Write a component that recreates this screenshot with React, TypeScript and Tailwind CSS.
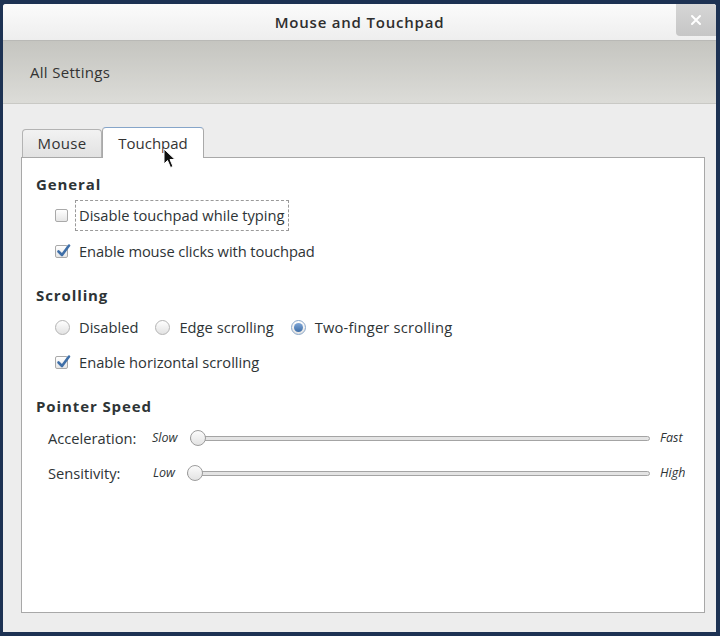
import React from "react";

const font = { fontFamily: '"Open Sans", "DejaVu Sans", sans-serif' };

function Checkbox({ checked }: { checked?: boolean }) {
  return (
    <span className="relative inline-block w-[13px] h-[13px] shrink-0 rounded-[2px] border border-[#a9a9a9] bg-gradient-to-b from-[#ffffff] to-[#e6e6e6]">
      {checked && (
        <svg className="absolute left-[0px] top-[-3px]" width="15" height="15" viewBox="0 0 15 15">
          <path d="M2.5 8.5 L6 12 L13 2.5" fill="none" stroke="#3f6fa8" strokeWidth="2.6" strokeLinecap="round" strokeLinejoin="round" />
        </svg>
      )}
    </span>
  );
}

function Radio({ checked }: { checked?: boolean }) {
  return (
    <span
      className={
        "relative inline-flex items-center justify-center w-[15px] h-[15px] shrink-0 rounded-full border bg-gradient-to-b from-[#ffffff] to-[#e2e2e2] " +
        (checked ? "border-[#8aa7c9]" : "border-[#b4b4b4]")
      }
    >
      {checked && <span className="w-[9px] h-[9px] rounded-full bg-gradient-to-b from-[#7fa6d6] to-[#3d6ea8]" />}
    </span>
  );
}

function Slider() {
  return (
    <div className="relative flex-1 h-[18px] flex items-center">
      <div className="w-full h-[5px] rounded-full border border-[#a4a4a4] bg-[#e4e4e4]" />
      <div className="absolute left-0 top-[1px] w-[16px] h-[16px] rounded-full border border-[#9d9d9d] bg-gradient-to-b from-[#fbfbfb] to-[#e3e3e3]" />
    </div>
  );
}

export default function App() {
  return (
    <div className="w-[720px] h-[636px] bg-[#1d3253] pt-[4px] pl-[3px] pr-[4px] pb-[4px] text-[#2e3436]" style={font}>
      <div className="w-full h-full flex flex-col bg-[#ededed] rounded-t-[3px] overflow-hidden">
        {/* title bar */}
        <div className="relative h-[37px] flex items-center justify-center bg-gradient-to-b from-[#fbfbfb] to-[#eeeeee] border-b border-[#b9b9b6]">
          <span className="text-[15px] font-semibold tracking-[0.8px] text-[#2e2e2e]">Mouse and Touchpad</span>
          <div className="absolute right-0 top-0 w-[40px] h-[32px] bg-gradient-to-b from-[#d6d6d6] to-[#c6c6c6] rounded-bl-[4px] flex items-center justify-center">
            <svg width="12" height="12" viewBox="0 0 12 12">
              <path d="M2 2 L10 10 M10 2 L2 10" stroke="#ffffff" strokeWidth="2" strokeLinecap="round" />
            </svg>
          </div>
        </div>
        {/* toolbar */}
        <div className="h-[63px] flex items-center pl-[27px] bg-gradient-to-b from-[#c5c5c0] to-[#dcdcd8] border-b border-[#c9c9c5]">
          <span className="text-[15px] tracking-[0.3px] text-[#333]">All Settings</span>
        </div>
        {/* body */}
        <div className="flex-1 flex flex-col pt-[22px] pl-[18px] pr-[11px] pb-[19px]">
          <div className="relative flex items-end h-[31px] pl-[1px]">
            <div className="h-[28px] w-[80px] flex items-center justify-center rounded-t-[4px] border border-b-0 border-[#b3b3b3] bg-gradient-to-b from-[#f2f2f2] to-[#e2e2e2] text-[15px] tracking-[0.3px] text-[#333]">
              Mouse
            </div>
            <div className="relative h-[31px] w-[102px] -mb-[1px] z-10 flex items-center justify-center rounded-t-[4px] border border-b-0 border-[#a9a9a9] border-t-[#86a5c9] bg-white text-[15px] text-[#333]">
              Touchpad
            </div>
            <svg className="absolute left-[142px] top-[22px] z-20" width="14" height="22" viewBox="0 0 14 22">
              <path d="M1 1 L1 16 L4.5 12.5 L7.5 19.5 L10 18.5 L7 11.5 L12 11.5 Z" fill="#111" stroke="#fff" strokeWidth="1" strokeLinejoin="round" />
            </svg>
          </div>
          <div className="flex-1 bg-white border border-[#a8a8a8] pt-[16px] flex flex-col text-[14.7px]">
            <div className="h-[20px] flex items-center pl-[14px] text-[15px] font-bold tracking-[0.9px]">General</div>
            <div className="mt-[6px] h-[31px] flex items-center pl-[33px]">
              <Checkbox />
              <span className="ml-[7px] h-[31px] px-[3px] flex items-center border border-dashed border-[#9a9a9a]">
                Disable touchpad while typing
              </span>
            </div>
            <div className="mt-[8px] h-[24px] flex items-center pl-[33px]">
              <Checkbox checked />
              <span className="ml-[11px] tracking-[-0.1px]">Enable mouse clicks with touchpad</span>
            </div>
            <div className="mt-[22px] h-[20px] flex items-center pl-[14px] text-[15px] font-bold tracking-[0.9px]">Scrolling</div>
            <div className="mt-[10px] h-[24px] flex items-center pl-[33px]">
              <Radio />
              <span className="ml-[9px]">Disabled</span>
              <span className="ml-[17px] flex items-center">
                <Radio />
              </span>
              <span className="ml-[9px]">Edge scrolling</span>
              <span className="ml-[17px] flex items-center">
                <Radio checked />
              </span>
              <span className="ml-[9px] tracking-[0.2px]">Two-finger scrolling</span>
            </div>
            <div className="mt-[11px] h-[24px] flex items-center pl-[33px]">
              <Checkbox checked />
              <span className="ml-[11px]">Enable horizontal scrolling</span>
            </div>
            <div className="mt-[22px] h-[20px] flex items-center pl-[14px] text-[15px] font-bold tracking-[0.9px]">Pointer Speed</div>
            <div className="mt-[10px] h-[24px] flex items-center pl-[26px] pr-[19px]">
              <span className="w-[104px]">Acceleration:</span>
              <span className="w-[38px] text-[12.5px] italic">Slow</span>
              <Slider />
              <span className="ml-[10px] w-[25px] text-[12.5px] italic">Fast</span>
            </div>
            <div className="mt-[11px] h-[24px] flex items-center pl-[26px] pr-[19px]">
              <span className="w-[105px]">Sensitivity:</span>
              <span className="w-[34px] text-[12.5px] italic">Low</span>
              <Slider />
              <span className="ml-[10px] w-[25px] text-[12.5px] italic overflow-hidden whitespace-nowrap">High</span>
            </div>
          </div>
        </div>
      </div>
    </div>
  );
}
